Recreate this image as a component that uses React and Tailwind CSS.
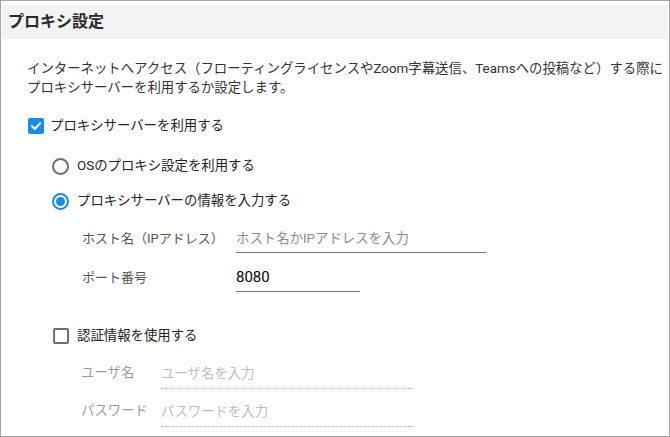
import { useState } from 'react';

const font = { fontFamily: 'Roboto, "Noto Sans CJK JP", sans-serif' };

const Checkbox = ({ checked, onChange }) => (
    <button
        onClick={onChange}
        className={`w-[16px] h-[16px] rounded-[2px] flex items-center justify-center shrink-0 ${checked ? 'bg-[#1a8ce8]' : 'border-2 border-[#6e6e6e] bg-white'}`}
    >
        {checked && (
            <svg width="12" height="12" viewBox="0 0 12 12" fill="none">
                <path d="M2 6.2 L4.8 9 L10 3.3" stroke="white" strokeWidth="1.9" strokeLinecap="square" />
            </svg>
        )}
    </button>
);

const Radio = ({ checked, onClick }) => (
    <button
        onClick={onClick}
        className={`w-[17px] h-[17px] rounded-full border-2 flex items-center justify-center shrink-0 bg-white ${checked ? 'border-[#1a8ce8]' : 'border-[#6e6e6e]'}`}
    >
        {checked && <span className="w-[9px] h-[9px] rounded-full bg-[#1a8ce8]" />}
    </button>
);

export default function App() {
    const [useProxy, setUseProxy] = useState(true);
    const [mode, setMode] = useState('manual');
    const [useAuth, setUseAuth] = useState(false);
    const [port, setPort] = useState('8080');

    return (
        <div style={font} className="w-[670px] h-[437px] bg-white border border-[#a3a3a3] text-[#222] overflow-hidden">
            <div className="mt-[4px] mx-[1px] h-[34px] bg-[#f3f3f3] flex items-center pl-[6px] text-[16px] font-bold text-[#2a2a2a]">
                プロキシ設定
            </div>

            <div className="pl-[26px] pt-[20px]">
                <p className="text-[13.4px] leading-[19px] text-[#333] whitespace-nowrap">
                    インターネットへアクセス（フローティングライセンスやZoom字幕送信、Teamsへの投稿など）する際に
                    <br />
                    プロキシサーバーを利用するか設定します。
                </p>

                <label className="mt-[19px] flex items-center gap-[6px] h-[20px] pl-[1px]">
                    <Checkbox checked={useProxy} onChange={() => setUseProxy(!useProxy)} />
                    <span className="text-[13.4px]">プロキシサーバーを利用する</span>
                </label>

                <div className="pl-[25px]">
                    <div className="mt-[20px] flex items-center gap-[8px] h-[20px]">
                        <Radio checked={mode === 'os'} onClick={() => setMode('os')} />
                        <span className="text-[13.4px]">OSのプロキシ設定を利用する</span>
                    </div>
                    <div className="mt-[15px] flex items-center gap-[8px] h-[20px]">
                        <Radio checked={mode === 'manual'} onClick={() => setMode('manual')} />
                        <span className="text-[13.4px]">プロキシサーバーの情報を入力する</span>
                    </div>

                    <div className="pl-[30px]">
                        <div className="mt-[15px] flex items-end h-[27px]">
                            <span className="w-[154px] shrink-0 whitespace-nowrap text-[13px] text-[#555] pb-[5px]">ホスト名（IPアドレス）</span>
                            <input
                                placeholder="ホスト名かIPアドレスを入力"
                                className="w-[250px] h-[27px] border-b border-[#767676] text-[13.4px] outline-none placeholder:text-[#8c8c8c] pb-[1px]"
                            />
                        </div>
                        <div className="mt-[12px] flex items-end h-[27px]">
                            <span className="w-[154px] shrink-0 whitespace-nowrap text-[13px] text-[#555] pb-[5px]">ポート番号</span>
                            <input
                                value={port}
                                onChange={(e) => setPort(e.target.value)}
                                className="w-[124px] h-[27px] border-b border-[#767676] text-[15px] text-black outline-none pb-[2px]"
                            />
                        </div>
                    </div>

                    <label className="mt-[34px] flex items-center gap-[8px] h-[20px] pl-[1px]">
                        <Checkbox checked={useAuth} onChange={() => setUseAuth(!useAuth)} />
                        <span className="text-[13.4px]">認証情報を使用する</span>
                    </label>

                    <div className="pl-[29px]">
                        <div className="mt-[15px] flex items-end h-[28px]">
                            <span className="w-[80px] shrink-0 whitespace-nowrap text-[13.4px] text-[#9a9a9a] pb-[6px]">ユーザ名</span>
                            <input
                                disabled={!useAuth}
                                placeholder="ユーザ名を入力"
                                className="w-[250px] h-[28px] border-b border-dotted border-[#aaa] text-[13.4px] outline-none bg-transparent placeholder:text-[#bdbdbd] pb-[2px]"
                            />
                        </div>
                        <div className="mt-[10px] flex items-end h-[28px]">
                            <span className="w-[80px] shrink-0 whitespace-nowrap text-[13.4px] text-[#9a9a9a] pb-[6px]">パスワード</span>
                            <input
                                type="password"
                                disabled={!useAuth}
                                placeholder="パスワードを入力"
                                className="w-[250px] h-[28px] border-b border-dotted border-[#aaa] text-[13.4px] outline-none bg-transparent placeholder:text-[#bdbdbd] pb-[2px]"
                            />
                        </div>
                    </div>
                </div>
            </div>
        </div>
    );
}
